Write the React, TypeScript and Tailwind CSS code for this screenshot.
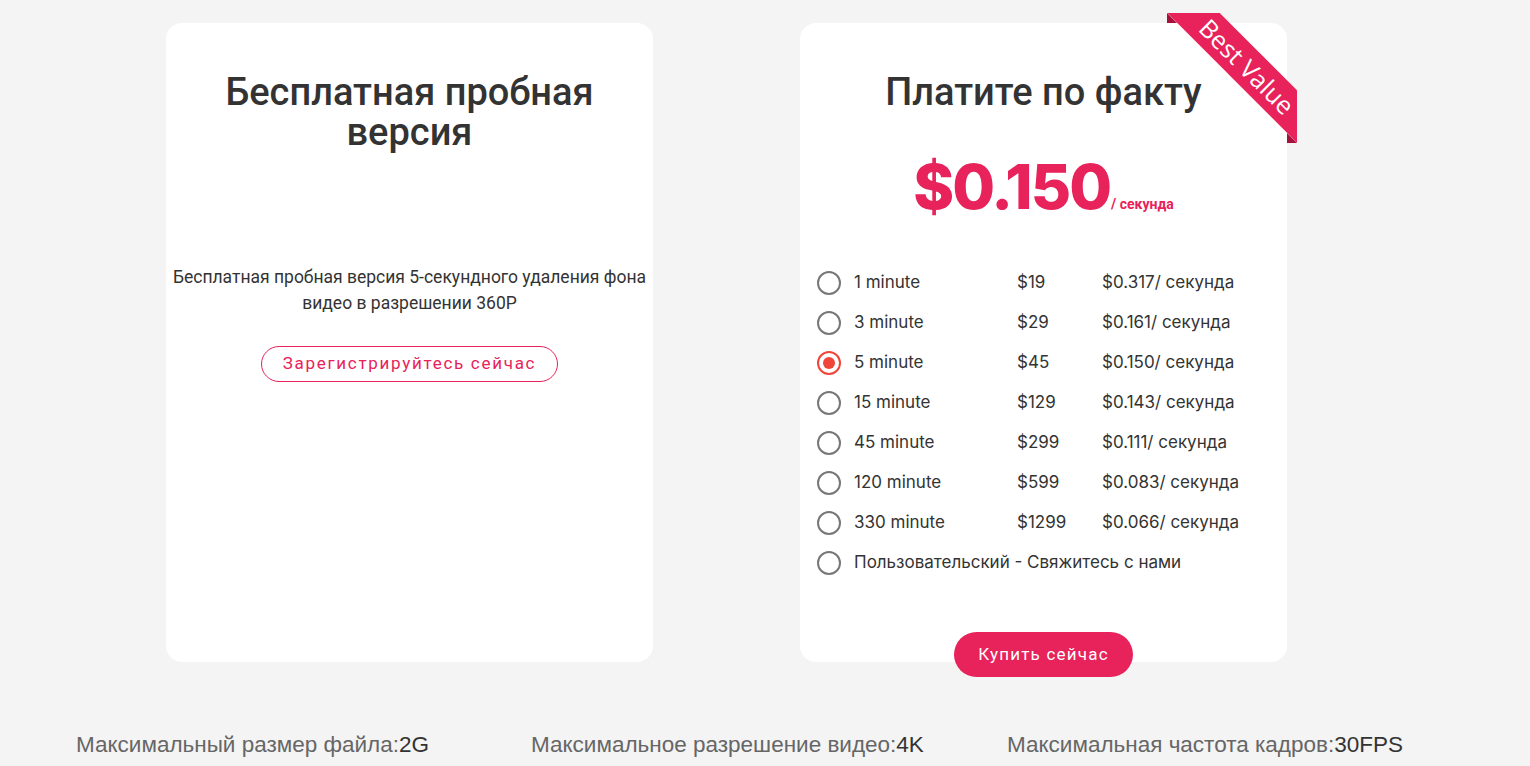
import React from 'react';

const plans = [
  { label: '1 minute', price: '$19', rate: '$0.317/ секунда' },
  { label: '3 minute', price: '$29', rate: '$0.161/ секунда' },
  { label: '5 minute', price: '$45', rate: '$0.150/ секунда' },
  { label: '15 minute', price: '$129', rate: '$0.143/ секунда' },
  { label: '45 minute', price: '$299', rate: '$0.111/ секунда' },
  { label: '120 minute', price: '$599', rate: '$0.083/ секунда' },
  { label: '330 minute', price: '$1299', rate: '$0.066/ секунда' },
];

const Radio: React.FC<{ checked?: boolean }> = ({ checked }) =>
  checked ? (
    <span className="flex h-6 w-6 items-center justify-center rounded-full border-[2.5px] border-[#f0453a]">
      <span className="h-3 w-3 rounded-full bg-[#f0453a]" />
    </span>
  ) : (
    <span className="block h-6 w-6 rounded-full border-[2.5px] border-[#777]" />
  );

const Ribbon: React.FC = () => (
  <div className="absolute -right-[10px] -top-[10px] h-[130px] w-[130px] overflow-hidden">
    <span className="absolute left-0 top-0 h-[10px] w-[10px] bg-[#a8103c] [clip-path:polygon(0_0,0_100%,100%_100%)]" />
    <span className="absolute bottom-0 right-0 h-[10px] w-[10px] bg-[#a8103c] [clip-path:polygon(0_0,0_100%,100%_100%)]" />
    <div className="absolute left-[-20px] top-[35px] flex h-[37px] w-[200px] rotate-45 items-center justify-center bg-[#e8225a]">
      <span className="font-['Open_Sans',sans-serif] text-[25px] font-medium leading-none text-white">Best Value</span>
    </div>
  </div>
);

export default function App() {
  return (
    <div className="min-h-screen bg-[#f4f4f4] pt-[23px] font-['Roboto',sans-serif] text-[#333]">
      <div className="flex gap-[147px] pl-[166px]">
        <div className="flex h-[639px] w-[487px] flex-col items-center rounded-2xl bg-white pt-[49px] text-center">
          <h2 className="text-[38px] font-medium leading-[40px]">
            Бесплатная пробная
            <br />
            версия
          </h2>
          <p className="mt-[112px] text-[17.5px] leading-[26px]">
            Бесплатная пробная версия 5-секундного удаления фона
            <br />
            видео в разрешении 360P
          </p>
          <button className="mt-[30px] h-[36px] w-[297px] rounded-full border border-[#e8225a] text-[17px] tracking-[1.7px] text-[#e8225a]">
            Зарегистрируйтесь сейчас
          </button>
        </div>

        <div className="relative flex h-[639px] w-[487px] flex-col items-center rounded-2xl bg-white pt-[49px]">
          <Ribbon />
          <h2 className="text-[38px] font-medium leading-[40px]">Платите по факту</h2>
          <div className="mt-[43px] flex items-end text-[#e8225a]">
            <span className="font-['Inter',sans-serif] text-[62px] font-extrabold leading-[64px] tracking-[-2px]">
              $0.150
            </span>
            <span className="mb-[4px] ml-[1px] text-[14px] font-bold">/ секунда</span>
          </div>
          <div className="mt-[44px] flex w-full flex-col pl-[17px] font-['Inter',sans-serif] text-[17px] text-[#333]">
            {plans.map((p) => (
              <div key={p.label} className="flex h-[40px] items-center">
                <Radio checked={p.label === '5 minute'} />
                <span className="ml-[13px] w-[163px]">{p.label}</span>
                <span className="w-[85px]">{p.price}</span>
                <span>{p.rate}</span>
              </div>
            ))}
            <div className="flex h-[40px] items-center">
              <Radio />
              <span className="ml-[13px]">Пользовательский - Свяжитесь с нами</span>
            </div>
          </div>
          <button className="mb-[-15px] mt-auto h-[45px] w-[179px] rounded-full bg-[#e8225a] text-[17px] font-normal tracking-[1.2px] text-white">
            Купить сейчас
          </button>
        </div>
      </div>

      <div className="mt-[66px] flex pl-[76px] font-['Liberation_Sans',sans-serif] text-[22.5px] text-[#666]">
        <div className="w-[455px]">
          Максимальный размер файла:<span className="text-[#333]">2G</span>
        </div>
        <div className="w-[476px]">
          Максимальное разрешение видео:<span className="text-[#333]">4K</span>
        </div>
        <div>
          Максимальная частота кадров:<span className="text-[#333]">30FPS</span>
        </div>
      </div>
    </div>
  );
}
